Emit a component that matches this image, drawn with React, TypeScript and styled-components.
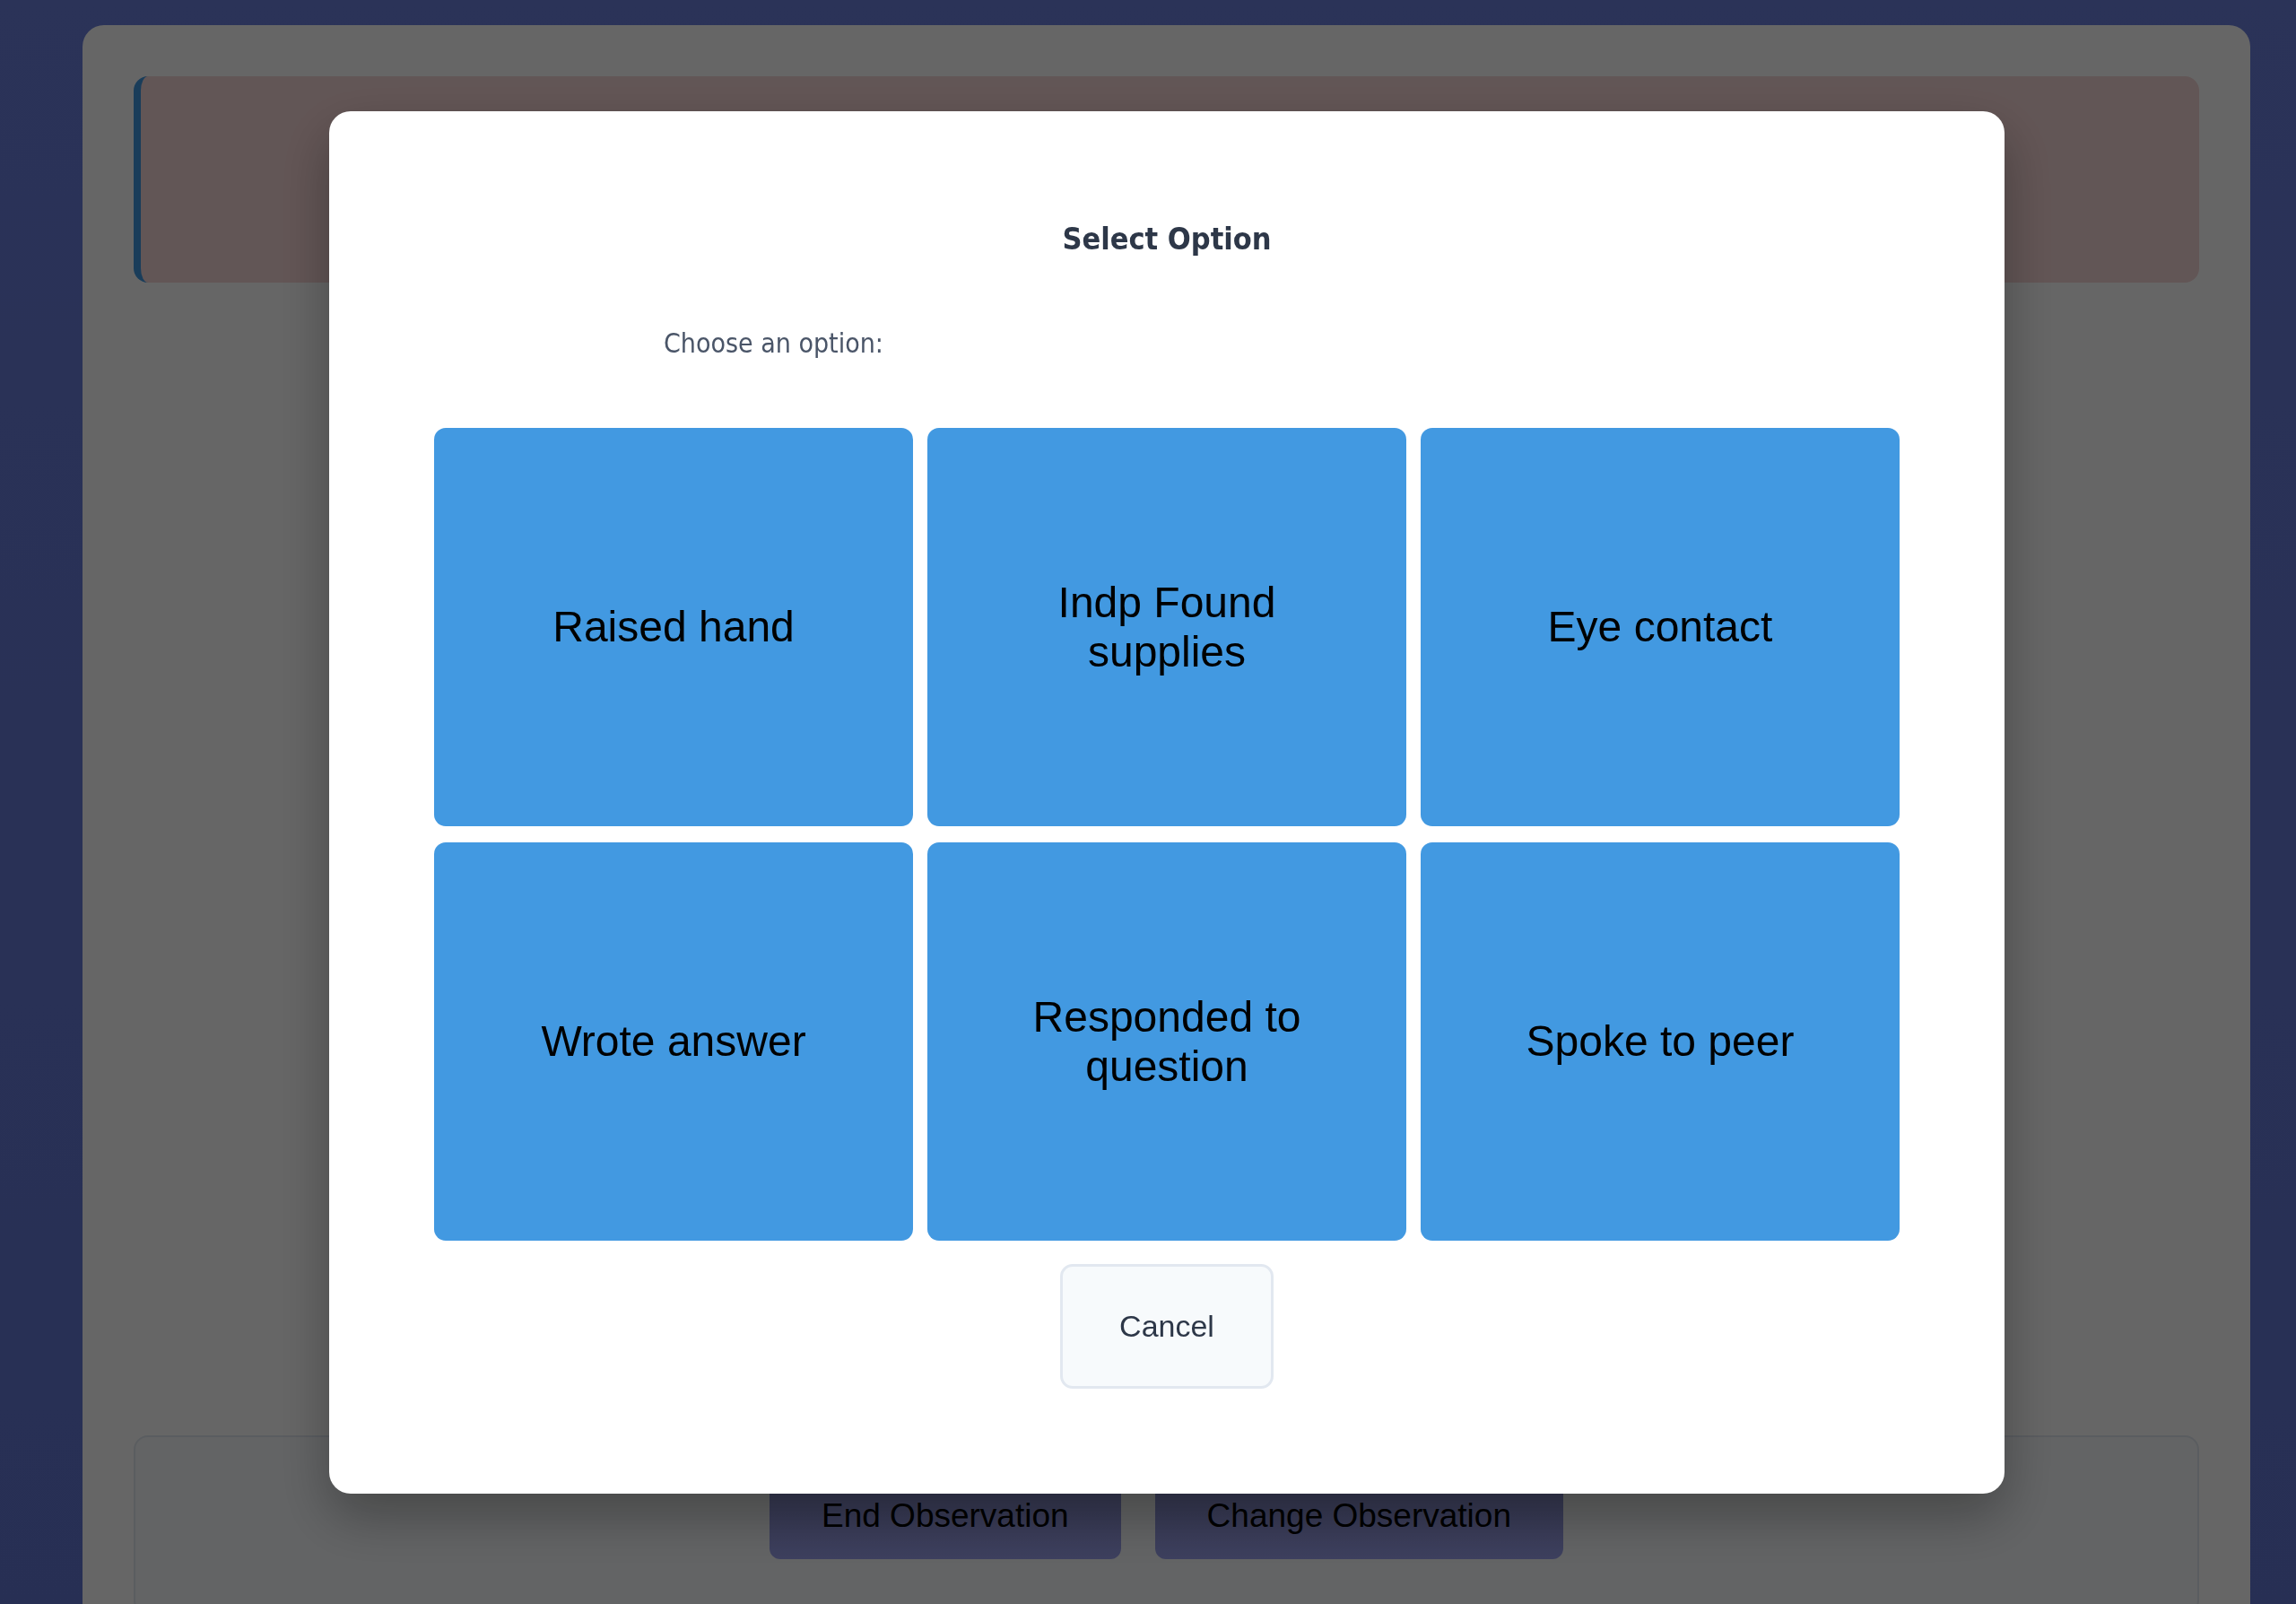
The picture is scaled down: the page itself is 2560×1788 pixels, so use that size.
import React from "react"
import styled, { createGlobalStyle } from "styled-components"

const OPTIONS = [
  "Raised hand",
  "Indp Found supplies",
  "Eye contact",
  "Wrote answer",
  "Responded to question",
  "Spoke to peer",
] as const

const GlobalStyle = createGlobalStyle`
  html, body {
    margin: 0;
    padding: 0;
    height: 100%;
    overflow: hidden;
  }

  body {
    background: linear-gradient(180deg, #6b7fdc 0%, #6377d3 100%);
    font-family: "Liberation Sans", Arial, sans-serif;
  }
`

const Page = styled.div`
  min-height: 100vh;
  padding: 28px 51px 0 92px;
  box-sizing: border-box;
`

const Panel = styled.main`
  display: flex;
  flex-direction: column;

  background: #ffffff;
  border-radius: 24px;
  padding: 57px 57px 0 57px;
  height: 1800px;
  box-sizing: border-box;
`

const AlertCard = styled.section`
  height: 230px;
  background: #f6d6d6;
  border-left: 8px solid #4299e1;
  border-radius: 16px;
`

const ContentArea = styled.div`
  height: 1285px;
`

const ControlBar = styled.footer`
  display: flex;
  justify-content: center;
  gap: 38px;

  background: #f7fafc;
  border: 2px solid #e2e8f0;
  border-radius: 16px;
  padding: 40px 0 60px;
`

const ControlButton = styled.button`
  font-family: "Liberation Sans", Arial, sans-serif;
  font-size: 37px;
  color: #000000;

  background: linear-gradient(180deg, #8288c2 0%, #9aa0ec 100%);
  border: none;
  border-radius: 12px;
  padding: 27px 58px;
`

const Overlay = styled.div`
  position: fixed;
  inset: 0;
  display: flex;
  align-items: center;
  justify-content: center;
  padding-left: 42px;

  background: rgba(0, 0, 0, 0.6);
`

const Modal = styled.div`
  display: flex;
  flex-direction: column;

  width: 1868px;
  box-sizing: border-box;
  padding: 122px 117px 117px;

  background: #ffffff;
  border-radius: 24px;
  box-shadow: 0 25px 60px rgba(0, 0, 0, 0.3);
`

const Title = styled.h2`
  margin: 0;
  text-align: center;

  font-family: "DejaVu Sans Condensed", "DejaVu Sans", sans-serif;
  font-stretch: condensed;
  font-weight: bold;
  font-size: 34px;
  line-height: 40px;
  color: #2d3748;
`

const Prompt = styled.p`
  margin: 80px 0 77px 256px;

  font-family: "DejaVu Sans Condensed", "DejaVu Sans", sans-serif;
  font-stretch: condensed;
  font-size: 30px;
  line-height: 34px;
  color: #4a5568;
`

const OptionGrid = styled.div`
  display: grid;
  grid-template-columns: repeat(3, 1fr);
  grid-auto-rows: 444px;
  gap: 18px 16px;
`

const OptionTile = styled.button`
  display: flex;
  align-items: center;
  justify-content: center;
  padding: 0 64px;

  background: #4299e1;
  border: none;
  border-radius: 13px;

  font-family: "Liberation Sans", Arial, sans-serif;
  font-size: 48px;
  color: #000000;
  text-align: center;
`

const CancelButton = styled.button`
  align-self: center;
  margin-top: 26px;
  padding: 47px 63px;

  background: #f7fafc;
  border: 3px solid #e2e8f0;
  border-radius: 14px;

  font-family: "Liberation Sans", Arial, sans-serif;
  font-size: 34px;
  color: #2d3748;
`

export default function App() {
  return (
    <>
      <GlobalStyle />
      <Page>
        <Panel>
          <AlertCard />
          <ContentArea />
          <ControlBar>
            <ControlButton>End Observation</ControlButton>
            <ControlButton>Change Observation</ControlButton>
          </ControlBar>
        </Panel>
      </Page>

      <Overlay>
        <Modal>
          <Title>Select Option</Title>
          <Prompt>Choose an option:</Prompt>
          <OptionGrid>
            { OPTIONS.map( option => (
              <OptionTile key={ option }>{ option }</OptionTile>
            )) }
          </OptionGrid>
          <CancelButton>Cancel</CancelButton>
        </Modal>
      </Overlay>
    </>
  )
}
